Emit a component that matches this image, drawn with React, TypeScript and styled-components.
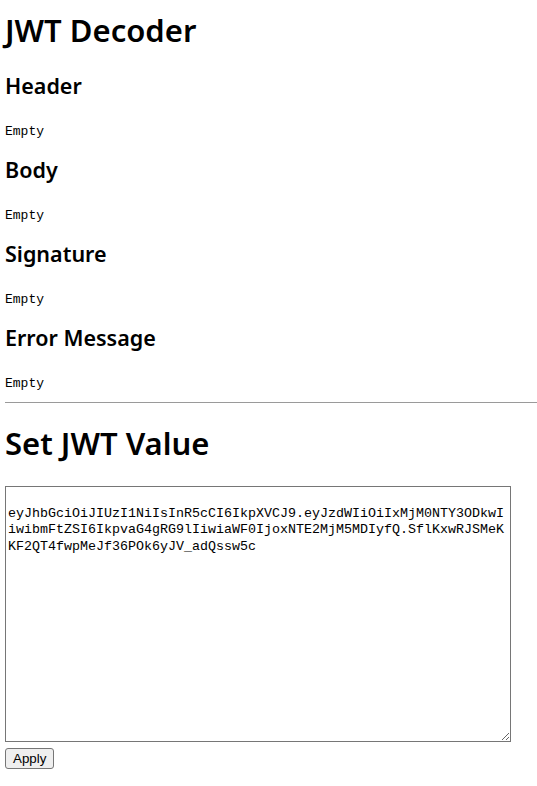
import styled, { createGlobalStyle } from "styled-components";

const GlobalStyle = createGlobalStyle`
  body {
    margin: 0;
    background: #fff;
    color: #000;
    font-family: "Noto Sans", "Open Sans", sans-serif;
  }
`;

const Page = styled.div`
  padding: 10px 0 20px 5px;
`;

const Title = styled.h1`
  margin: 0;
  font-size: 31px;
  line-height: 40px;
  font-weight: 600;
`;

const Section = styled.section`
  margin-top: 16px;
  &:first-of-type {
    margin-top: 22px;
  }
`;

const SectionTitle = styled.h2`
  margin: 0;
  font-size: 21.5px;
  line-height: 28px;
  font-weight: 600;
`;

const Value = styled.pre`
  margin: 24px 0 0;
  font-family: "Liberation Mono", monospace;
  font-size: 13px;
  line-height: 16px;
`;

const Divider = styled.hr`
  margin: 10px 0 20px;
  border: none;
  border-top: 1px solid #9a9a9a;
`;

const Editor = styled.textarea`
  display: block;
  box-sizing: border-box;
  margin-top: 23px;
  width: 506px;
  height: 256px;
  padding: 2px;
  border: 1px solid #767676;
  font-family: "Liberation Mono", monospace;
  font-size: 13.33px;
  line-height: 16.5px;
  color: #000;
`;

const ApplyButton = styled.button`
  display: block;
  margin-top: 6px;
  height: 21px;
  padding: 0 7px;
  font-family: "Liberation Sans", Arial, sans-serif;
  font-size: 13.33px;
  color: #000;
  background: #efefef;
  border: 1px solid #767676;
  border-radius: 3px;
`;

const SAMPLE =
  "\neyJhbGciOiJIUzI1NiIsInR5cCI6IkpXVCJ9.eyJzdWIiOiIxMjM0NTY3ODkwIiwibmFtZSI6IkpvaG4gRG9lIiwiaWF0IjoxNTE2MjM5MDIyfQ.SflKxwRJSMeKKF2QT4fwpMeJf36POk6yJV_adQssw5c";

const parts = ["Header", "Body", "Signature", "Error Message"];

const App = () => {
  return (
    <Page>
      <GlobalStyle />
      <Title>JWT Decoder</Title>
      {parts.map((name) => (
        <Section key={name}>
          <SectionTitle>{name}</SectionTitle>
          <Value>Empty</Value>
        </Section>
      ))}
      <Divider />
      <Title>Set JWT Value</Title>
      <Editor defaultValue={SAMPLE} />
      <ApplyButton>Apply</ApplyButton>
    </Page>
  );
};

export default App;
